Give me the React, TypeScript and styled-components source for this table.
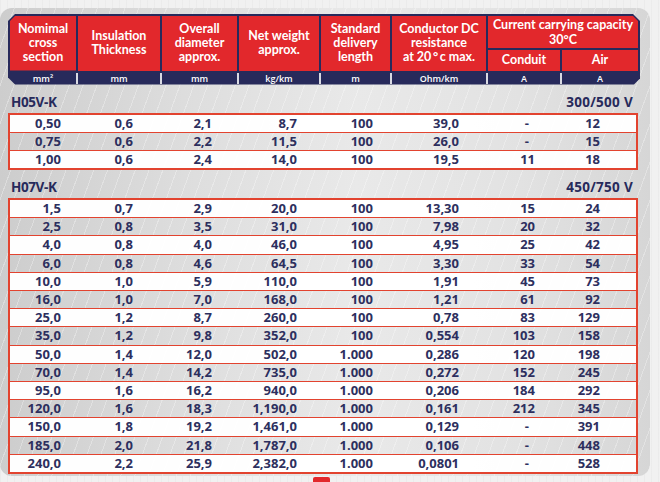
import React from "react";
import styled, { createGlobalStyle } from "styled-components";

const Global = createGlobalStyle`
  html, body { margin: 0; padding: 0; }
  body {
    width: 660px;
    height: 482px;
    overflow: hidden;
    background: #f1f1f1;
    background-image: repeating-linear-gradient(90deg, rgba(0,0,0,0.025) 0 1px, transparent 1px 7px);
    font-family: "Open Sans", "Liberation Sans", sans-serif;
  }
`;

const NAVY = "#272a5b";
const RED = "#e2282c";
const LINE = "#e2432f";

const Page = styled.div`
  display: flex;
  flex-direction: column;
  align-items: flex-start;
  padding-top: 8px;
`;

const Panel = styled.div`
  width: 650px;
  height: 468px;
  box-sizing: border-box;
  padding: 6px 0 0 8px;
  border-radius: 12px;
  background-color: #dcdcdc;
  background-image:
    repeating-linear-gradient(110deg, rgba(255,255,255,0.3) 0 1px, transparent 1px 13px),
    linear-gradient(90deg, #cdcdcd 0%, #dedede 30%, #e9e9e9 55%, #e2e2e2 80%, #d6d6d6 100%);
  display: flex;
  flex-direction: column;
`;

const HeaderBox = styled.div`
  width: 632px;
  box-sizing: border-box;
  background: ${NAVY};
  padding: 2px 2px 1px 2px;
  display: grid;
  grid-template-columns: 66px 82px 75px 80px 69px 94px 72px 76px;
  grid-template-rows: 32px 20.5px 11px;
  column-gap: 2px;
  row-gap: 2px;
  clip-path: polygon(7px 0, calc(100% - 7px) 0, 100% 7px, 100% calc(100% - 6px), calc(100% - 6px) 100%, 7px 100%, 0 calc(100% - 7px), 0 7px);
`;

const HeadCell = styled.div<{ $col: number; $row: string; $cut?: "left" | "right" }>`
  grid-column: ${(p) => p.$col};
  grid-row: ${(p) => p.$row};
  background: ${RED};
  color: #fff;
  font-family: Lato, "Open Sans", sans-serif;
  font-weight: 700;
  font-size: 12.5px;
  line-height: 14px;
  text-align: center;
  white-space: nowrap;
  display: flex;
  align-items: center;
  justify-content: center;
  clip-path: ${(p) =>
    p.$cut === "left"
      ? "polygon(5px 0, 100% 0, 100% 100%, 0 100%, 0 5px)"
      : p.$cut === "right"
      ? "polygon(0 0, calc(100% - 5px) 0, 100% 5px, 100% 100%, 0 100%)"
      : "none"};
`;

const SpanHead = styled(HeadCell)`
  grid-column: 7 / span 2;
  line-height: 14.5px;
  padding-top: 1px;
`;

const UnitCell = styled.div<{ $col: number; $first?: boolean }>`
  grid-column: ${(p) => p.$col};
  grid-row: 3;
  color: #fff;
  font-size: 9px;
  font-weight: 600;
  line-height: 11px;
  text-align: center;
  box-shadow: ${(p) => (p.$first ? "none" : "-2px 0 0 0 #d9dae3")};
`;

const SectionRow = styled.div<{ $top: number }>`
  width: 628px;
  display: flex;
  justify-content: space-between;
  align-items: flex-end;
  margin-top: ${(p) => p.$top}px;
  height: 18px;
  padding: 0 3px 0 3px;
  box-sizing: border-box;
  color: ${NAVY};
  font-weight: 700;
  font-size: 13.5px;
  line-height: 18px;
`;

const Left = styled.span`
  letter-spacing: -0.4px;
`;

const Right = styled.span`
  letter-spacing: 0.3px;
`;

const TableBox = styled.div`
  width: 630px;
  box-sizing: border-box;
  border: 2px solid ${LINE};
  margin-top: 2px;
  display: flex;
  flex-direction: column;
`;

const Row = styled.div<{ $white: boolean; $first: boolean }>`
  display: grid;
  grid-template-columns: 66px 85px 77px 82px 71px 95px 75px 75px;
  height: 17.2px;
  border-top: ${(p) => (p.$first ? "none" : `1px solid ${LINE}`)};
  background: ${(p) => (p.$white ? "rgba(255,255,255,0.97)" : "transparent")};
  color: #2d2f5e;
  font-weight: 700;
  font-size: 13px;
  line-height: 17.2px;
`;

const PADS = [15, 28, 26, 23, 18, 27, 26, 36];

const Cell = styled.div<{ $pad: number }>`
  text-align: right;
  padding-right: ${(p) => p.$pad}px;
  white-space: nowrap;
`;

const Tab = styled.div`
  width: 17px;
  height: 5px;
  margin: 1px 0 0 313px;
  background: ${RED};
  border-radius: 2px 2px 0 0;
`;

const h05: string[][] = [
  ["0,50", "0,6", "2,1", "8,7", "100", "39,0", "-", "12"],
  ["0,75", "0,6", "2,2", "11,5", "100", "26,0", "-", "15"],
  ["1,00", "0,6", "2,4", "14,0", "100", "19,5", "11", "18"],
];

const h07: string[][] = [
  ["1,5", "0,7", "2,9", "20,0", "100", "13,30", "15", "24"],
  ["2,5", "0,8", "3,5", "31,0", "100", "7,98", "20", "32"],
  ["4,0", "0,8", "4,0", "46,0", "100", "4,95", "25", "42"],
  ["6,0", "0,8", "4,6", "64,5", "100", "3,30", "33", "54"],
  ["10,0", "1,0", "5,9", "110,0", "100", "1,91", "45", "73"],
  ["16,0", "1,0", "7,0", "168,0", "100", "1,21", "61", "92"],
  ["25,0", "1,2", "8,7", "260,0", "100", "0,78", "83", "129"],
  ["35,0", "1,2", "9,8", "352,0", "100", "0,554", "103", "158"],
  ["50,0", "1,4", "12,0", "502,0", "1.000", "0,286", "120", "198"],
  ["70,0", "1,4", "14,2", "735,0", "1.000", "0,272", "152", "245"],
  ["95,0", "1,6", "16,2", "940,0", "1.000", "0,206", "184", "292"],
  ["120,0", "1,6", "18,3", "1,190,0", "1.000", "0,161", "212", "345"],
  ["150,0", "1,8", "19,2", "1,461,0", "1.000", "0,129", "-", "391"],
  ["185,0", "2,0", "21,8", "1,787,0", "1.000", "0,106", "-", "448"],
  ["240,0", "2,2", "25,9", "2,382,0", "1.000", "0,0801", "-", "528"],
];

const DataTable = ({ rows }: { rows: string[][] }) => (
  <TableBox>
    {rows.map((r, i) => (
      <Row key={i} $white={i % 2 === 0} $first={i === 0}>
        {r.map((v, j) => (
          <Cell key={j} $pad={v === "-" ? PADS[j] + 6 : PADS[j]}>
            {v}
          </Cell>
        ))}
      </Row>
    ))}
  </TableBox>
);

export default function App() {
  return (
    <Page>
      <Global />
      <Panel>
        <HeaderBox>
          <HeadCell $col={1} $row="1 / span 2" $cut="left">
            Nomimal
            <br />
            cross
            <br />
            section
          </HeadCell>
          <HeadCell $col={2} $row="1 / span 2">
            Insulation
            <br />
            Thickness
          </HeadCell>
          <HeadCell $col={3} $row="1 / span 2">
            Overall
            <br />
            diameter
            <br />
            approx.
          </HeadCell>
          <HeadCell $col={4} $row="1 / span 2">
            Net weight
            <br />
            approx.
          </HeadCell>
          <HeadCell $col={5} $row="1 / span 2">
            Standard
            <br />
            delivery
            <br />
            length
          </HeadCell>
          <HeadCell $col={6} $row="1 / span 2">
            Conductor DC
            <br />
            resistance
            <br />
            at 20{"\u2009"}°{"\u2009"}c max.
          </HeadCell>
          <SpanHead $col={7} $row="1" $cut="right">
            Current carrying capacity
            <br />
            30°C
          </SpanHead>
          <HeadCell $col={7} $row="2">
            Conduit
          </HeadCell>
          <HeadCell $col={8} $row="2">
            Air
          </HeadCell>
          <UnitCell $col={1} $first>
            mm²
          </UnitCell>
          <UnitCell $col={2}>mm</UnitCell>
          <UnitCell $col={3}>mm</UnitCell>
          <UnitCell $col={4}>kg/km</UnitCell>
          <UnitCell $col={5}>m</UnitCell>
          <UnitCell $col={6}>Ohm/km</UnitCell>
          <UnitCell $col={7}>A</UnitCell>
          <UnitCell $col={8}>A</UnitCell>
        </HeaderBox>
        <SectionRow $top={8}>
          <Left>H05V-K</Left>
          <Right>300/500 V</Right>
        </SectionRow>
        <DataTable rows={h05} />
        <SectionRow $top={8}>
          <Left>H07V-K</Left>
          <Right>450/750 V</Right>
        </SectionRow>
        <DataTable rows={h07} />
      </Panel>
      <Tab />
    </Page>
  );
}
